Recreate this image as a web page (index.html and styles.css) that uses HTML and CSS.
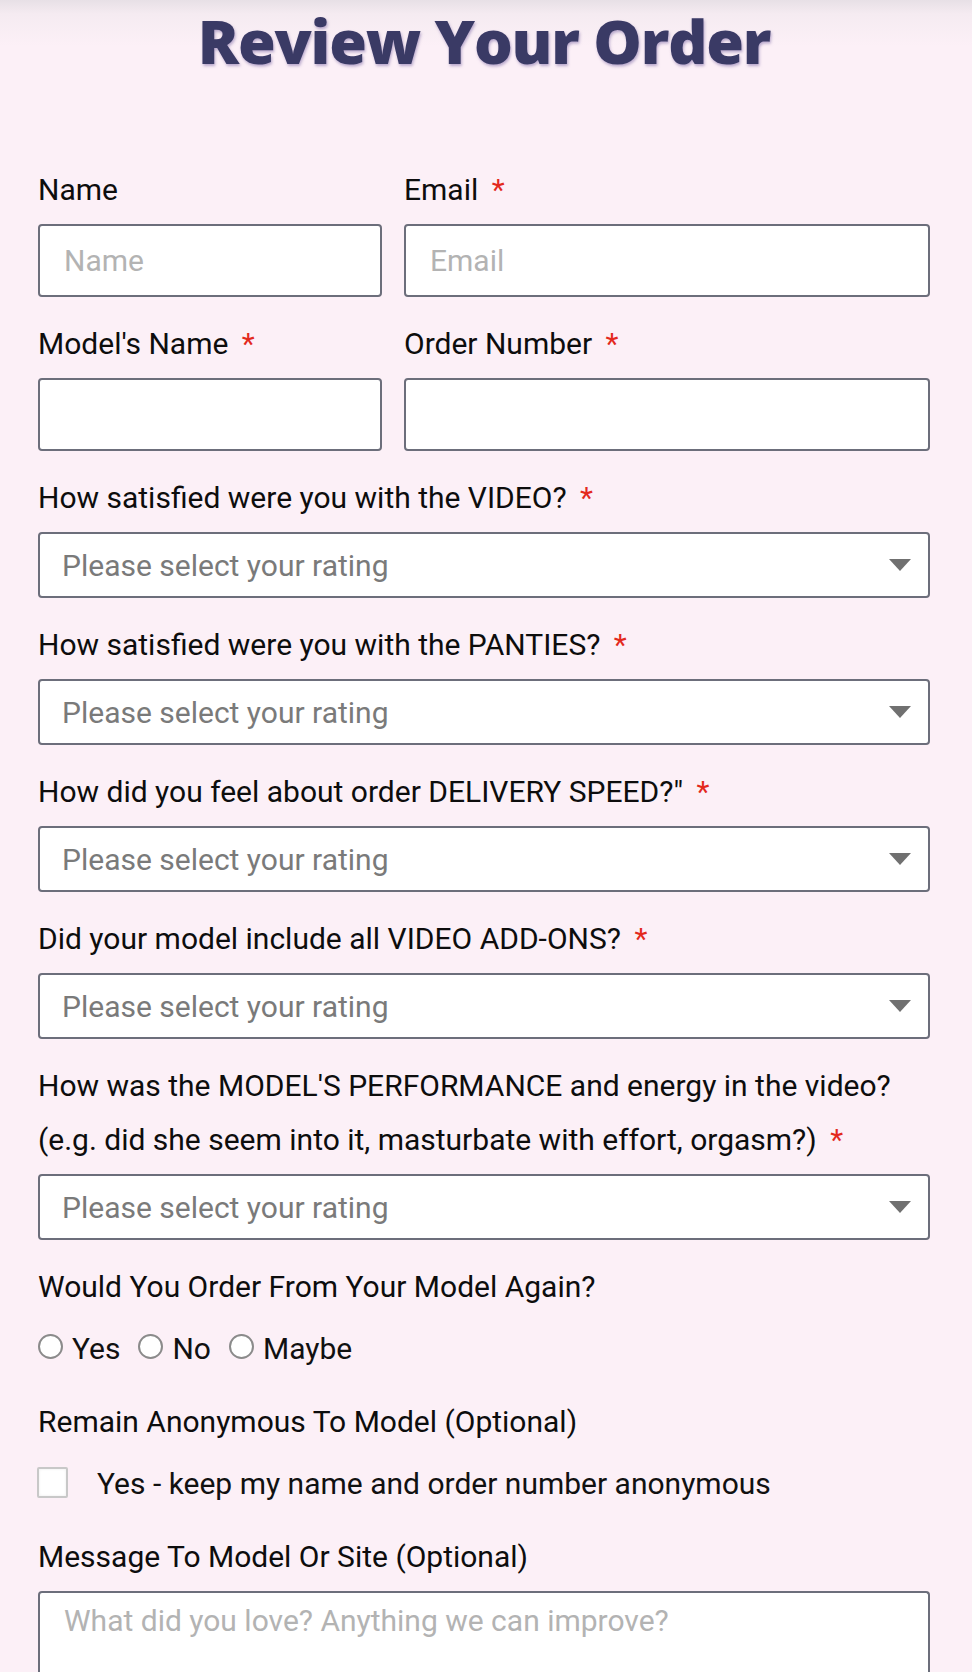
FILE: index.html
```html
<!DOCTYPE html>
<html lang="en">
<head>
<meta charset="utf-8">
<title>Review Your Order</title>
<link rel="stylesheet" href="styles.css">
</head>
<body>
<div class="page">
  <h1 class="title">Review Your Order</h1>
  <form class="form">
    <div class="row">
      <div class="field col-a">
        <label class="label">Name</label>
        <input class="input" type="text" placeholder="Name">
      </div>
      <div class="field col-b">
        <label class="label">Email <span class="req">*</span></label>
        <input class="input" type="email" placeholder="Email">
      </div>
    </div>
    <div class="row">
      <div class="field col-a">
        <label class="label">Model's Name <span class="req">*</span></label>
        <input class="input" type="text">
      </div>
      <div class="field col-b">
        <label class="label">Order Number <span class="req">*</span></label>
        <input class="input" type="text">
      </div>
    </div>

    <div class="field">
      <label class="label">How satisfied were you with the VIDEO? <span class="req">*</span></label>
      <div class="select-wrap">
        <select class="select"><option>Please select your rating</option></select>
        <svg class="arrow" width="22" height="12" viewBox="0 0 22 12"><path d="M0 0H22L11 12Z" fill="#707070"/></svg>
      </div>
    </div>
    <div class="field">
      <label class="label">How satisfied were you with the PANTIES? <span class="req">*</span></label>
      <div class="select-wrap">
        <select class="select"><option>Please select your rating</option></select>
        <svg class="arrow" width="22" height="12" viewBox="0 0 22 12"><path d="M0 0H22L11 12Z" fill="#707070"/></svg>
      </div>
    </div>
    <div class="field">
      <label class="label">How did you feel about order DELIVERY SPEED?" <span class="req">*</span></label>
      <div class="select-wrap">
        <select class="select"><option>Please select your rating</option></select>
        <svg class="arrow" width="22" height="12" viewBox="0 0 22 12"><path d="M0 0H22L11 12Z" fill="#707070"/></svg>
      </div>
    </div>
    <div class="field">
      <label class="label">Did your model include all VIDEO ADD-ONS? <span class="req">*</span></label>
      <div class="select-wrap">
        <select class="select"><option>Please select your rating</option></select>
        <svg class="arrow" width="22" height="12" viewBox="0 0 22 12"><path d="M0 0H22L11 12Z" fill="#707070"/></svg>
      </div>
    </div>
    <div class="field">
      <label class="label">How was the MODEL'S PERFORMANCE and energy in the video?<br>(e.g. did she seem into it, masturbate with effort, orgasm?) <span class="req">*</span></label>
      <div class="select-wrap">
        <select class="select"><option>Please select your rating</option></select>
        <svg class="arrow" width="22" height="12" viewBox="0 0 22 12"><path d="M0 0H22L11 12Z" fill="#707070"/></svg>
      </div>
    </div>

    <div class="field">
      <label class="label">Would You Order From Your Model Again?</label>
      <div class="choices">
        <label class="choice"><input class="radio" type="radio" name="again"><span>Yes</span></label>
        <label class="choice"><input class="radio" type="radio" name="again"><span>No</span></label>
        <label class="choice"><input class="radio" type="radio" name="again"><span>Maybe</span></label>
      </div>
    </div>

    <div class="field">
      <label class="label">Remain Anonymous To Model (Optional)</label>
      <label class="check-row"><input class="checkbox" type="checkbox"><span>Yes - keep my name and order number anonymous</span></label>
    </div>

    <div class="field last">
      <label class="label">Message To Model Or Site (Optional)</label>
      <textarea class="textarea" placeholder="What did you love? Anything we can improve?"></textarea>
    </div>
  </form>
</div>
</body>
</html>
```

FILE: styles.css
```css
html, body {
  margin: 0;
  padding: 0;
}
body {
  background: #fcf0f7;
  font-family: Roboto, "Liberation Sans", sans-serif;
  color: #111;
}
.page {
  background: linear-gradient(to bottom, #e7e0e6 0px, #f5ebf1 14px, #fcf0f7 46px);
  padding: 0 42px 0 38px;
  height: 1672px;
  overflow: hidden;
  box-sizing: border-box;
}
.title {
  margin: 0;
  height: 163px;
  padding-top: 4px;
  box-sizing: border-box;
  text-align: center;
  font-family: "Open Sans", Lato, sans-serif;
  font-weight: 800;
  font-size: 61px;
  line-height: 74px;
  letter-spacing: -1.2px;
  color: #3a3a65;
  text-shadow: 1px 2px 3px rgba(130, 110, 170, 0.55);
}
.form {
  display: flex;
  flex-direction: column;
}
.row {
  display: flex;
  gap: 22px;
}
.col-a { width: 344px; }
.col-b { flex: 1; }
.field {
  display: flex;
  flex-direction: column;
  margin-bottom: 20px;
}
.label {
  font-size: 30px;
  line-height: 54px;
  color: #0d0d0d;
}
.req {
  color: #e3291d;
  margin-left: 6px;
}
.input {
  margin-top: 7px;
  height: 73px;
  box-sizing: border-box;
  border: 2px solid #6c6e7b;
  border-radius: 4px;
  background: #fff;
  padding: 0 24px;
  font-family: Roboto, "Liberation Sans", sans-serif;
  font-size: 30px;
  color: #111;
  outline: none;
}
.input::placeholder,
.textarea::placeholder {
  color: #b3b3b3;
}
.select-wrap {
  position: relative;
  margin-top: 7px;
}
.select {
  display: block;
  width: 100%;
  height: 66px;
  box-sizing: border-box;
  border: 2px solid #6c6e7b;
  border-radius: 4px;
  background: #fff;
  padding: 0 22px;
  font-family: Roboto, "Liberation Sans", sans-serif;
  font-size: 30px;
  color: #7a7a7a;
  appearance: none;
  -webkit-appearance: none;
  outline: none;
}
.arrow {
  position: absolute;
  right: 19px;
  top: 27px;
  pointer-events: none;
}
.choices {
  display: flex;
  gap: 18px;
  margin-top: 7px;
  height: 54px;
  align-items: center;
}
.choice {
  display: flex;
  align-items: center;
  gap: 9px;
  font-size: 30px;
}
.radio {
  appearance: none;
  -webkit-appearance: none;
  margin: 0 0 3px 0;
  width: 25px;
  height: 25px;
  border: 2px solid #8b8b8b;
  border-radius: 50%;
  background: #fff;
  box-sizing: border-box;
}
.check-row {
  display: flex;
  align-items: center;
  gap: 29px;
  font-size: 30px;
  margin-top: 7px;
  height: 54px;
}
.checkbox {
  appearance: none;
  -webkit-appearance: none;
  margin: 0 0 2px -1px;
  width: 31px;
  height: 31px;
  border: 2px solid #c8c8c8;
  border-radius: 2px;
  background: #fff;
  box-shadow: inset 0 0 3px rgba(0, 0, 0, 0.08);
  box-sizing: border-box;
}
.textarea {
  margin-top: 7px;
  height: 100px;
  box-sizing: border-box;
  border: 2px solid #6c6e7b;
  border-bottom: 0;
  border-radius: 4px 4px 0 0;
  background: #fff;
  padding: 8px 24px;
  font-family: Roboto, "Liberation Sans", sans-serif;
  font-size: 30px;
  line-height: 40px;
  resize: none;
  outline: none;
}
```
